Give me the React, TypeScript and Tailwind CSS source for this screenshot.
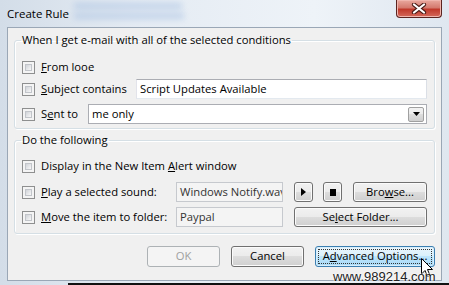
import React from 'react';

function CheckBox() {
  return (
    <span className="w-[13px] h-[13px] shrink-0 border border-[#8e8f8f] bg-[#f4f4f4] p-[2px]">
      <span className="block w-full h-full bg-[linear-gradient(135deg,#d0d3d8,#f8f8f8)] border border-[#c2c5ca]" />
    </span>
  );
}

function Btn({ children, className = '' }: { children?: React.ReactNode; className?: string }) {
  return (
    <div
      className={
        'h-[20px] shrink-0 rounded-[3px] border border-[#707070] flex items-center justify-center bg-[linear-gradient(#f2f2f2_0%,#ebebeb_50%,#dddddd_50%,#cfcfcf_100%)] shadow-[inset_0_0_0_1px_#fbfbfb] text-black ' +
        className
      }
    >
      {children}
    </div>
  );
}

function Group({ title, children }: { title: string; children: React.ReactNode }) {
  return (
    <fieldset className="border border-[#d5dfe5] rounded-[3px] px-[7px] shadow-[inset_1px_1px_0_#ffffff,1px_1px_0_#ffffff]">
      <legend className="px-[1px] -ml-[1px] leading-[16px]">{title}</legend>
      {children}
    </fieldset>
  );
}

export default function App() {
  return (
    <div className="w-[449px] h-[285px] relative overflow-hidden flex flex-col whitespace-nowrap bg-[linear-gradient(90deg,#d3dde8_0%,#e4ebf3_30%,#eef3f8_70%,#dfe7f0_100%)] font-['Open_Sans',sans-serif] text-[11.25px] text-black">
      {/* blurred glass behind the title */}
      <div className="absolute left-[74px] top-[3px] w-[108px] h-[6px] bg-[#a9c2e3] blur-[3px] opacity-60" />
      <div className="absolute left-[74px] top-[13px] w-[110px] h-[6px] bg-[#a9c2e3] blur-[3px] opacity-60" />

      <div className="relative h-[27px] shrink-0 pl-[7px] pt-[6px] leading-[16px] text-[11.5px]">Create Rule</div>

      <div className="absolute top-0 right-[7px] w-[46px] h-[18px] rounded-b-[4px] border border-t-0 border-[#5b2420] bg-[linear-gradient(#e9a99f_0%,#d47a6e_45%,#c0392b_55%,#d46a5c_100%)] shadow-[inset_0_0_0_1px_#f0b6ae] flex items-center justify-center">
        <svg width="16" height="11" viewBox="0 0 16 11">
          <path d="M3 1.5 L13 9.5 M13 1.5 L3 9.5" stroke="#4a1b16" strokeWidth="4.2" strokeLinecap="round" />
          <path d="M3 1.5 L13 9.5 M13 1.5 L3 9.5" stroke="#ffffff" strokeWidth="2.2" strokeLinecap="round" />
        </svg>
      </div>

      <div className="mx-[7px] h-[254px] shrink-0 border border-[#9aa7b6] bg-[#f0f0f0] flex flex-col px-[6px]">
        <div className="mt-[4px]">
          <Group title="When I get e-mail with all of the selected conditions">
            <div className="pt-[11px] pb-[4px] flex flex-col">
              <div className="h-[16px] flex items-center gap-[6px]">
                <CheckBox />
                <span>
                  <u>F</u>rom looe
                </span>
              </div>
              <div className="mt-[4px] h-[20px] flex items-center gap-[6px]">
                <CheckBox />
                <span>
                  <u>S</u>ubject contains
                </span>
                <div className="ml-auto w-[291px] h-[20px] border border-[#abadb3] border-l-[#e2e3ea] border-r-[#dbdfe6] border-b-[#e3e9ef] bg-white px-[3px] flex items-center">
                  Script Updates Available
                </div>
              </div>
              <div className="mt-[5px] h-[20px] flex items-center gap-[6px]">
                <CheckBox />
                <span>
                  S<u>e</u>nt to
                </span>
                <div className="ml-auto w-[339px] h-[20px] border border-[#abadb3] bg-white pl-[3px] pr-[2px] flex items-center">
                  <span className="flex-1">me only</span>
                  <div className="w-[16px] h-[15px] border border-[#a0a0a0] rounded-[2px] bg-[linear-gradient(#f2f2f2_0%,#ebebeb_50%,#dddddd_50%,#cfcfcf_100%)] flex items-center justify-center">
                    <svg width="7" height="4" viewBox="0 0 7 4">
                      <path d="M0 0 H7 L3.5 4 Z" fill="#000" />
                    </svg>
                  </div>
                </div>
              </div>
            </div>
          </Group>
        </div>

        <div className="mt-[3px]">
          <Group title="Do the following">
            <div className="pt-[10px] pb-[6px] flex flex-col">
              <div className="h-[16px] flex items-center gap-[6px]">
                <CheckBox />
                <span>
                  Display in the New Item <u>A</u>lert window
                </span>
              </div>
              <div className="mt-[8px] h-[20px] flex items-center gap-[6px]">
                <CheckBox />
                <span>
                  <u>P</u>lay a selected sound:
                </span>
                <div className="ml-auto flex items-center">
                  <div className="w-[107px] h-[20px] border border-[#c6c9ce] bg-[#f4f4f4] px-[3px] flex items-center overflow-hidden text-[#333]">
                    Windows Notify.wav
                  </div>
                  <Btn className="ml-[11px] w-[19px]">
                    <svg width="5" height="8" viewBox="0 0 5 8">
                      <path d="M0 0 L5 4 L0 8 Z" fill="#000" />
                    </svg>
                  </Btn>
                  <Btn className="ml-[10px] w-[19px]">
                    <span className="w-[6px] h-[7px] bg-black" />
                  </Btn>
                  <Btn className="ml-[11px] w-[74px]">
                    Bro<u>w</u>se...
                  </Btn>
                </div>
              </div>
              <div className="mt-[5px] h-[20px] flex items-center gap-[6px]">
                <CheckBox />
                <span>
                  <u>M</u>ove the item to folder:
                </span>
                <div className="ml-auto flex items-center">
                  <div className="w-[107px] h-[20px] border border-[#c6c9ce] bg-[#f4f4f4] px-[3px] flex items-center text-[#333]">
                    Paypal
                  </div>
                  <Btn className="ml-[11px] w-[133px]">
                    Se<u>l</u>ect Folder...
                  </Btn>
                </div>
              </div>
            </div>
          </Group>
        </div>

        <div className="mt-[12px] flex justify-end gap-[11px]">
          <div className="w-[73px] h-[21px] rounded-[3px] border border-[#adb2b5] bg-[#f4f4f4] flex items-center justify-center text-[#a0a0a0]">
            OK
          </div>
          <Btn className="w-[73px] h-[21px]">Cancel</Btn>
          <div className="w-[120px] h-[21px] rounded-[3px] border border-[#3c7fb1] bg-[linear-gradient(#eaf6fd_0%,#d9f0fc_50%,#bee6fd_50%,#a7d9f5_100%)] shadow-[inset_0_0_0_1px_#d8eefb] p-[2px]">
            <div className="w-full h-full border border-dotted border-[#333] flex items-center justify-center">
              A<u>d</u>vanced Options...
            </div>
          </div>
        </div>
      </div>

      <div className="h-[4px] ml-[68px] border-b-[2px] border-[#111]" />

      {/* watermark and pointer over the dialog */}
      <svg className="absolute left-[421px] top-[258px]" width="13" height="20" viewBox="0 0 13 20">
        <path d="M0.5 0.5 L0.5 16 L4 12.5 L6.5 18.5 L9 17.5 L6.5 11.5 L11.5 11.5 Z" fill="#fff" stroke="#000" strokeWidth="1" />
      </svg>
      <div className="absolute left-[333px] top-[270px] font-['Liberation_Sans',sans-serif] text-[13px] leading-[14px] text-[#222] [text-shadow:0_0_2px_#fff,0_0_2px_#fff]">
        www.989214.com
      </div>
    </div>
  );
}
